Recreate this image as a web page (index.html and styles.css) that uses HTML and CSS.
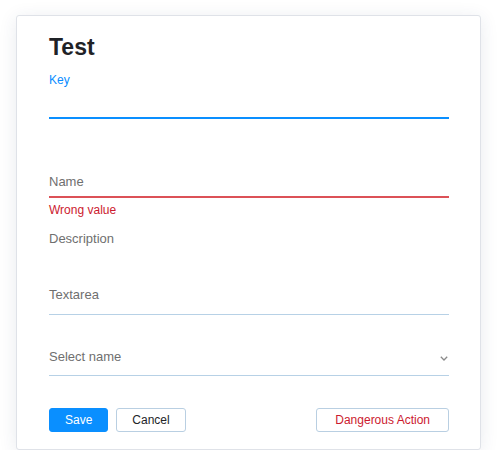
FILE: index.html
```html
<!DOCTYPE html>
<html lang="en">
<head>
<meta charset="utf-8">
<title>Test</title>
<link rel="stylesheet" href="styles.css">
</head>
<body>
<div class="card">
  <h1 class="title">Test</h1>

  <div class="field field-focused">
    <div class="float-label">Key</div>
    <div class="input"></div>
  </div>

  <div class="field field-error">
    <div class="input"><span class="placeholder">Name</span></div>
  </div>
  <div class="error-text">Wrong value</div>

  <div class="plain-label">Description</div>

  <div class="line-field textarea-field">
    <span class="placeholder">Textarea</span>
  </div>

  <div class="line-field select-field">
    <span class="placeholder">Select name</span>
    <svg class="chevron" width="8" height="5" viewBox="0 0 8 5" aria-hidden="true">
      <polyline points="0.8,0.8 4,4 7.2,0.8" fill="none" stroke="#8a8a8a" stroke-width="1.3"/>
    </svg>
  </div>

  <div class="actions">
    <button class="btn btn-primary">Save</button>
    <button class="btn">Cancel</button>
    <span class="spacer"></span>
    <button class="btn btn-danger">Dangerous Action</button>
  </div>
</div>
</body>
</html>
```

FILE: styles.css
```css
* { box-sizing: border-box; }

html, body {
  margin: 0;
  padding: 0;
  background: #ffffff;
}

body {
  font-family: "Liberation Sans", Arial, Helvetica, sans-serif;
  color: #222428;
  padding: 15px 0 0 16px;
}

.card {
  width: 465px;
  height: 435px;
  background: #fff;
  border: 1px solid #dfe2e8;
  border-radius: 3px;
  box-shadow: 0 3px 18px rgba(40, 60, 100, 0.10);
  padding: 17px 31px 17px 32px;
}

.title {
  margin: 0 0 11px;
  font-size: 23px;
  line-height: 28px;
  font-weight: bold;
  color: #1f2226;
}

.float-label {
  font-size: 12px;
  line-height: 16px;
  color: #0a8dff;
}

.field-focused .input {
  height: 31px;
  border-bottom: 2px solid #0a8fff;
}

.field-error {
  margin-top: 31px;
  padding-top: 16px;
}

.field-error .input {
  height: 32px;
  padding-top: 8px;
  border-bottom: 2px solid #dc5157;
}

.placeholder {
  display: block;
  font-size: 13px;
  line-height: 16px;
  color: #6f6f6f;
}

.error-text {
  margin-top: 4px;
  font-size: 12px;
  line-height: 16px;
  color: #cc1a2e;
}

.plain-label {
  margin-top: 13px;
  font-size: 13px;
  line-height: 16px;
  color: #6f6f6f;
}

.line-field {
  display: flex;
  align-items: center;
  justify-content: space-between;
  border-bottom: 1px solid #b7d1e6;
}

.textarea-field {
  margin-top: 40px;
  padding-bottom: 11px;
}

.select-field {
  margin-top: 34px;
  padding-bottom: 10px;
}

.chevron {
  display: block;
  margin-right: 1px;
  margin-top: 2px;
}

.actions {
  display: flex;
  align-items: center;
  gap: 8px;
  margin-top: 32px;
}

.spacer { flex: 1; }

.btn {
  height: 24px;
  padding: 0 15px;
  font-family: inherit;
  font-size: 12px;
  line-height: 22px;
  color: #222428;
  background: #fff;
  border: 1px solid #b9cfe2;
  border-radius: 3px;
  cursor: pointer;
}

.btn-primary {
  background: #0a8fff;
  border-color: #0a8fff;
  color: #ffffff;
}

.btn-danger {
  padding: 0 18px;
  color: #cc1a2e;
}
```
